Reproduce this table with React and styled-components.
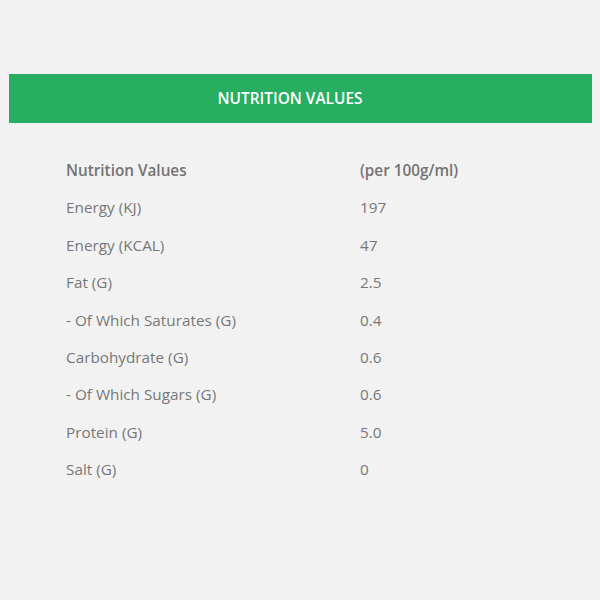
import styled, { createGlobalStyle } from "styled-components";
import { Fragment } from "react";

const GlobalStyle = createGlobalStyle`
  html, body {
    margin: 0;
    padding: 0;
    background: #f2f2f2;
  }
  body {
    font-family: "Open Sans", "Liberation Sans", sans-serif;
  }
`

const Page = styled.div`
  width: 600px;
  height: 600px;
  padding: 74px 8px 0 9px;
  box-sizing: border-box;
  background: #f2f2f2;
`

const Banner = styled.div`
  height: 49px;
  padding-right: 21px;
  background-color: #27ae60;
  color: #ffffff;
  display: flex;
  align-items: center;
  justify-content: center;
  font-size: 15.4px;
  font-weight: 600;
`

const Table = styled.div`
  display: grid;
  grid-template-columns: 294px 1fr;
  margin: 29px 0 0 57px;
  font-size: 15.3px;
`

const Cell = styled.div`
  height: 37.4px;
  line-height: 37.4px;
  font-weight: ${(props) => (props.head ? 600 : 400)};
  color: ${(props) => (props.head ? "#737373" : "#777777")};
`

const rows = [
  ["Energy (KJ)", "197"],
  ["Energy (KCAL)", "47"],
  ["Fat (G)", "2.5"],
  ["- Of Which Saturates (G)", "0.4"],
  ["Carbohydrate (G)", "0.6"],
  ["- Of Which Sugars (G)", "0.6"],
  ["Protein (G)", "5.0"],
  ["Salt (G)", "0"],
]

function App() {
  return (
    <>
      <GlobalStyle />
      <Page>
        <Banner>NUTRITION VALUES</Banner>
        <Table>
          <Cell head>Nutrition Values</Cell>
          <Cell head>(per 100g/ml)</Cell>
          {rows.map(([name, value]) => (
            <Fragment key={name}>
              <Cell>{name}</Cell>
              <Cell>{value}</Cell>
            </Fragment>
          ))}
        </Table>
      </Page>
    </>
  );
}

export default App;
